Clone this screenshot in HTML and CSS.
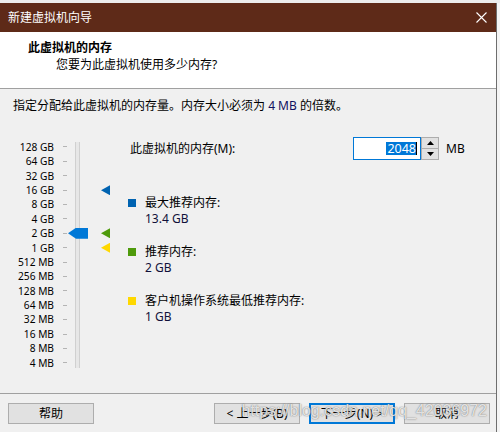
FILE: index.html
```html
<!DOCTYPE html>
<html lang="zh-CN">
<head>
<meta charset="utf-8">
<title>新建虚拟机向导</title>
<link rel="stylesheet" href="styles.css">
</head>
<body>
<div class="top-strip"></div>
<div class="dialog">
  <div class="titlebar">
    <span class="title">新建虚拟机向导</span>
    <svg class="close" width="11" height="11" viewBox="0 0 11 11"><path d="M0.5 0.5 L10.5 10.5 M10.5 0.5 L0.5 10.5" stroke="#fff" stroke-width="1.1" fill="none"/></svg>
  </div>
  <div class="header">
    <div class="h-title">此虚拟机的内存</div>
    <div class="h-sub">您要为此虚拟机使用多少内存?</div>
  </div>
  <div class="body">
    <p class="intro">指定分配给此虚拟机的内存量。内存大小必须为 <span class="num">4 MB</span> 的倍数。</p>
    <div class="main">
      <div class="scale">
        <div class="track"><div class="thumb"></div></div>
        <span class="lbl">128 GB</span><span class="tick"></span><span class="mk"></span>
        <span class="lbl">64 GB</span><span class="tick"></span><span class="mk"></span>
        <span class="lbl">32 GB</span><span class="tick"></span><span class="mk"></span>
        <span class="lbl">16 GB</span><span class="tick"></span><span class="mk"><i class="tri blue"></i></span>
        <span class="lbl">8 GB</span><span class="tick"></span><span class="mk"></span>
        <span class="lbl">4 GB</span><span class="tick"></span><span class="mk"></span>
        <span class="lbl">2 GB</span><span class="tick"></span><span class="mk"><i class="tri green"></i></span>
        <span class="lbl">1 GB</span><span class="tick"></span><span class="mk"><i class="tri yellow"></i></span>
        <span class="lbl">512 MB</span><span class="tick"></span><span class="mk"></span>
        <span class="lbl">256 MB</span><span class="tick"></span><span class="mk"></span>
        <span class="lbl">128 MB</span><span class="tick"></span><span class="mk"></span>
        <span class="lbl">64 MB</span><span class="tick"></span><span class="mk"></span>
        <span class="lbl">32 MB</span><span class="tick"></span><span class="mk"></span>
        <span class="lbl">16 MB</span><span class="tick"></span><span class="mk"></span>
        <span class="lbl">8 MB</span><span class="tick"></span><span class="mk"></span>
        <span class="lbl">4 MB</span><span class="tick"></span><span class="mk"></span>
      </div>
      <div class="panel">
        <div class="mem-row">
          <span class="mem-label">此虚拟机的内存(M):</span>
          <div class="input"><span class="sel">2048</span><span class="caret"></span></div>
          <div class="spin">
            <span class="spin-btn"><svg width="7" height="4" viewBox="0 0 7 4"><path d="M3.5 0 L7 4 L0 4 Z" fill="#000"/></svg></span>
            <span class="spin-btn"><svg width="7" height="4" viewBox="0 0 7 4"><path d="M0 0 L7 0 L3.5 4 Z" fill="#000"/></svg></span>
          </div>
          <span class="unit">MB</span>
        </div>
        <ul class="legend">
          <li><i class="sq blue"></i><div><div>最大推荐内存:</div><div class="val">13.4 GB</div></div></li>
          <li><i class="sq green"></i><div><div>推荐内存:</div><div class="val">2 GB</div></div></li>
          <li><i class="sq yellow"></i><div><div>客户机操作系统最低推荐内存:</div><div class="val">1 GB</div></div></li>
        </ul>
      </div>
    </div>
  </div>
  <div class="footer">
    <button class="btn">帮助</button>
    <div class="btn-group">
      <button class="btn">&lt; 上一步(B)</button>
      <button class="btn primary">下一步(N) &gt;</button>
      <button class="btn">取消</button>
    </div>
    <span class="watermark">https://blog.csdn.net/qq_42036972</span>
  </div>
</div>
</body>
</html>
```

FILE: styles.css
```css
* { box-sizing: border-box; }
html, body { margin: 0; padding: 0; }
body {
  width: 500px;
  height: 432px;
  overflow: hidden;
  background: #f4f4f4;
  font-family: "Noto Sans", "Noto Sans CJK SC", sans-serif;
  font-size: 12px;
  color: #000;
}
.top-strip { height: 3px; background: #ececec; }
.dialog {
  width: 497px;
  height: 429px;
  background: #f0f0f0;
  border-right: 1px solid #6e6e6e;
  position: relative;
}
.titlebar {
  height: 29px;
  background: #5e2a18;
  color: #fff;
  display: flex;
  align-items: center;
  padding: 0 9px 0 8px;
  justify-content: space-between;
}
.title { line-height: 16px; }
.close { display: block; margin-right: 0; }
.header {
  height: 57px;
  background: #fff;
  border-bottom: 1px solid #a0a0a0;
  padding-top: 8px;
}
.h-title { font-weight: bold; padding-left: 28px; line-height: 16px; }
.h-sub { padding-left: 56px; line-height: 16px; margin-top: 1px; }
.body { height: 304px; padding-top: 9px; }
.intro { margin: 0; padding-left: 13px; line-height: 16px; }
.num { color: #101060; }
.main { display: flex; margin-top: 23px; }
.scale {
  width: 118px;
  display: grid;
  grid-template-columns: 54px 9px 4px 8px 6px 20px 10px;
  grid-auto-rows: 14.4px;
  margin-top: 2.8px;
  position: relative;
}
.lbl {
  grid-column: 1;
  text-align: right;
  font-size: 10.2px;
  line-height: 14.4px;
  color: #000;
  white-space: nowrap;
}
.tick {
  grid-column: 3;
  align-self: center;
  height: 1px;
  background: #b4b4b4;
}
.mk { grid-column: 7; display: flex; align-items: center; }
.track {
  grid-column: 5;
  grid-row: 1 / span 16;
  width: 5px;
  margin: 2px 0 2px 0;
  background: #e7e7e7;
  border-left: 1px solid #d0d0d0;
  border-right: 1px solid #d0d0d0;
  position: relative;
}
.thumb {
  position: absolute;
  left: -8px;
  top: 86px;
  width: 20px;
  height: 11px;
  background: #0078d7;
  clip-path: polygon(0 50%, 40% 0, 100% 0, 100% 100%, 40% 100%);
}
.tri {
  display: block;
  width: 9px;
  height: 10px;
  clip-path: polygon(0 50%, 100% 0, 100% 100%);
}
.tri.blue { background: #0063b1; }
.tri.green { background: #4e9a0b; }
.tri.yellow { background: #ffd800; }
.panel { flex: 1; padding-left: 10px; }
.mem-row { display: flex; align-items: center; height: 23px; }
.mem-label { width: 225px; padding-left: 2px; line-height: 16px; }
.input {
  width: 68px;
  height: 23px;
  background: #fff;
  border: 1px solid #0078d7;
  display: flex;
  justify-content: flex-end;
  align-items: center;
  padding-right: 3px;
}
.sel {
  background: #0078d7;
  color: #fff;
  line-height: 13px;
  height: 13px;
  font-size: 12.5px;
  padding: 0 0 0 1px;
}
.caret { width: 1px; height: 13px; background: #000; }
.spin { display: flex; flex-direction: column; width: 18px; height: 23px; }
.spin-btn {
  flex: 1;
  background: #e1e1e1;
  border: 1px solid #adadad;
  display: flex;
  align-items: center;
  justify-content: center;
}
.spin-btn + .spin-btn { border-top: none; }
.spin-btn svg { display: block; }
.unit { margin-left: 7px; font-size: 12px; }
.legend { list-style: none; margin: 35px 0 0 0; padding: 0; }
.legend li { display: flex; line-height: 16px; margin-bottom: 17px; }
.sq { display: block; width: 8px; height: 8px; margin-top: 4px; margin-right: 9px; flex: none; }
.sq.blue { background: #0063b1; }
.sq.green { background: #4e9a0b; }
.sq.yellow { background: #ffd800; }
.val { color: #10103a; }
.footer {
  border-top: 1px solid #a0a0a0;
  height: 36px;
  padding: 9px 6px 0 8px;
  display: flex;
  align-items: flex-start;
  position: relative;
}
.btn-group { margin-left: auto; display: flex; gap: 9px; }
.btn {
  width: 86px;
  height: 21px;
  margin: 0;
  padding: 0;
  background: #e1e1e1;
  border: 1px solid #adadad;
  font-family: "Noto Sans", "Noto Sans CJK SC", sans-serif;
  font-size: 12px;
  color: #000;
  line-height: 17px;
}
.btn.primary { border: 2px solid #0078d7; line-height: 15px; }
.watermark {
  position: absolute;
  right: 9px;
  top: 8px;
  font-family: "Liberation Sans", sans-serif;
  font-size: 16px;
  color: rgba(255, 255, 255, 0.8);
  text-shadow: 0 0 1px rgba(70, 70, 70, 0.7), 0 0 2px rgba(120, 120, 120, 0.4);
  pointer-events: none;
  white-space: nowrap;
}
```
